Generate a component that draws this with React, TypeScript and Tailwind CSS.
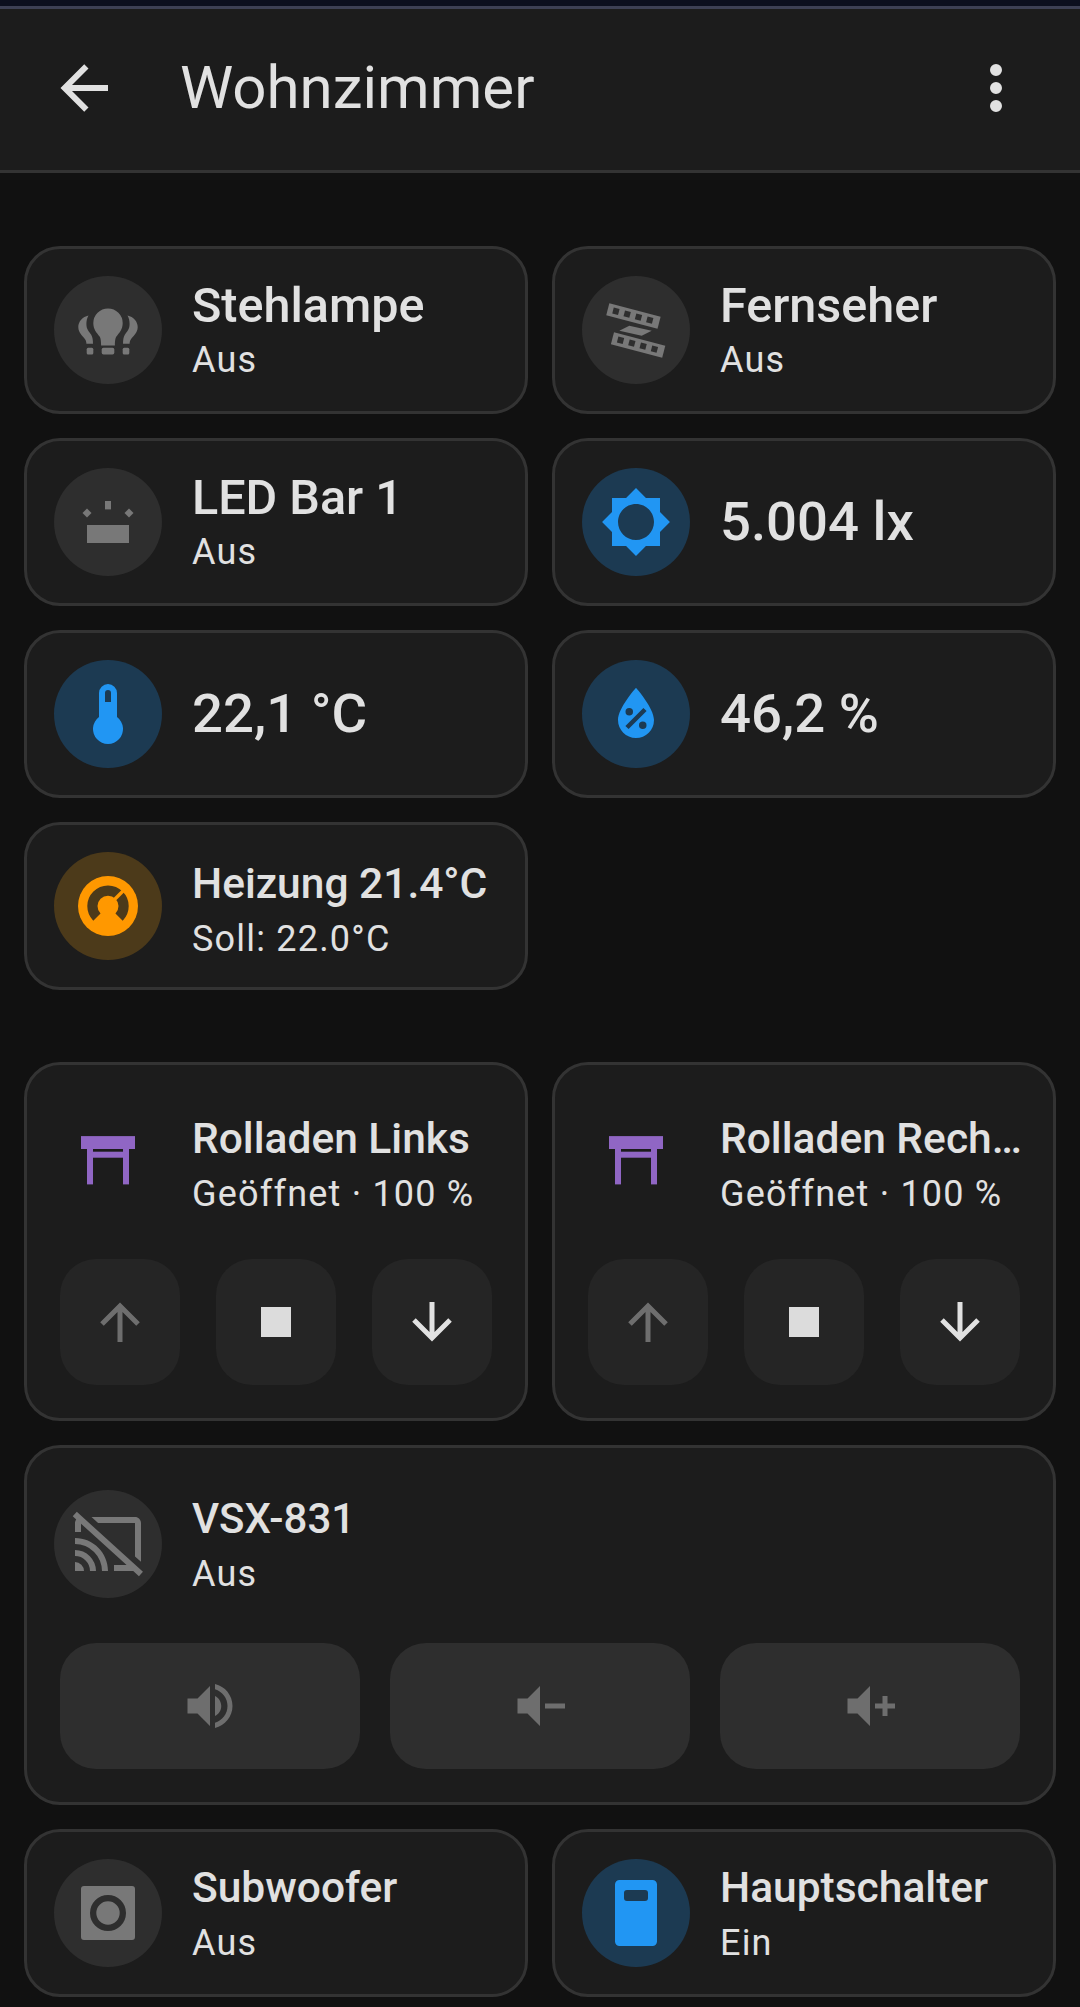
import React from "react";

const BLUE = "#2196f3";
const GRAY = "#787878";

function Ico({ children, cls = "w-[72px] h-[72px]", vb = "0 0 24 24" }: { children: React.ReactNode; cls?: string; vb?: string }) {
  return (
    <svg viewBox={vb} className={cls + " shrink-0"}>
      {children}
    </svg>
  );
}

const P = ({ d, c }: { d: string; c: string }) => <path d={d} fill={c} fillRule="evenodd" />;

const Lamp = () => (
  <Ico>
    <g fill={GRAY}>
      <path d="M12 4.8a4.9 4.9 0 0 1 4.9 4.9c0 2.2-1.2 3.3-2.1 4.5-.3.5-.5 1.2-.5 3H9.7c0-1.8-.2-2.5-.5-3-.9-1.2-2.1-2.3-2.1-4.5A4.9 4.9 0 0 1 12 4.8z" />
      <rect x="9.9" y="17.9" width="4.2" height="2.3" rx="0.6" />
      <path d="M5.5 7.2C3.5 7.6 2.1 9.3 2.1 11c0 2.1 1.6 3 2.3 4.2.3.5.4 1 .4 1.4H7c0-1.4-.2-2.2-.6-3C5.6 12.400 4.800 11.800 4.800 10c0-1 .2-2 .7-2.800z" />
      <path d="M18.500 7.200C20.500 7.600 21.900 9.300 21.900 11c0 2.100-1.600 3-2.300 4.200-.3.500-.4 1-.4 1.400H17c0-1.400.2-2.200.6-3 .8-1.200 1.600-1.800 1.600-3.600 0-1-.2-2-.7-2.800z" />
      <rect x="4.900" y="17.900" width="2.200" height="2.300" rx="0.5" />
      <rect x="16.900" y="17.900" width="2.200" height="2.300" rx="0.5" />
    </g>
  </Ico>
);

const Strip = ({ x, y }: { x: number; y: number }) => (
  <g transform={`translate(${x} ${y}) rotate(14.6)`}>
    <rect width="159" height="37" fill={GRAY} />
    {[16, 51, 86, 121].map((h) => (
      <rect key={h} x={h} y="9" width="18" height="18" fill="#2e2e2e" />
    ))}
  </g>
);

const Film = () => (
  <Ico vb="90 100 216 216">
    <Strip x={118} y={128} />
    <Strip x={132} y={215} />
    <polygon points="178,195 245,210 215,225 148,210" fill={GRAY} />
  </Ico>
);

const Led = () => (
  <Ico>
    <g fill={GRAY}>
      <rect x="5" y="13" width="14" height="6" />
      <rect x="11" y="5" width="2" height="2.800" />
      <polygon points="5,7.500 6.500,9 5,10.500 3.500,9" />
      <polygon points="19,7.500 20.500,9 19,10.500 17.500,9" />
    </g>
  </Ico>
);

const Sun = () => (
  <Ico>
    <P c={BLUE} d="M20 8.690V4h-4.690L12 .690 8.690 4H4v4.690L.690 12 4 15.310V20h4.690L12 23.310 15.310 20H20v-4.690L23.310 12 20 8.690zM12 18c-3.310 0-6-2.690-6-6s2.690-6 6-6 6 2.690 6 6-2.690 6-6 6z" />
  </Ico>
);

const Thermo = () => (
  <Ico>
    <P c={BLUE} d="M15 13V5A3 3 0 0 0 9 5V13A5 5 0 1 0 15 13M12 4A1 1 0 0 1 13 5V8H11V5A1 1 0 0 1 12 4Z" />
  </Ico>
);

const Drop = () => (
  <Ico>
    <P c={BLUE} d="M12,3.25C12,3.25 6,10 6,14C6,17.32 8.69,20 12,20A6,6 0 0,0 18,14C18,10 12,3.25 12,3.25M14.47,9.97L15.53,11.03L9.53,17.03L8.47,15.97M9.75,10A1.25,1.25 0 0,1 11,11.25A1.25,1.25 0 0,1 9.75,12.5A1.25,1.25 0 0,1 8.5,11.25A1.25,1.25 0 0,1 9.75,10M14.25,14.5A1.25,1.25 0 0,1 15.5,15.75A1.25,1.25 0 0,1 14.25,17A1.25,1.25 0 0,1 13,15.75A1.25,1.25 0 0,1 14.25,14.5Z" />
  </Ico>
);

const Gauge = () => (
  <Ico>
    <circle cx="12" cy="12" r="10" fill="#ff9800" />
    <path d="M8.300 15.700A5.200 5.200 0 1 1 15.700 15.700" fill="none" stroke="#4c3a1a" strokeWidth="3.400" />
    <path d="M12 12L18.500 5.500" fill="none" stroke="#ff9800" strokeWidth="1.100" />
  </Ico>
);

const Gate = () => (
  <Ico>
    <g fill="#9066c4">
      <rect x="3" y="3.700" width="18" height="4.300" />
      <rect x="5" y="8" width="2" height="11.800" />
      <rect x="17" y="8" width="2" height="11.800" />
      <rect x="7" y="8.900" width="10" height="2" />
    </g>
  </Ico>
);

const CastOff = () => (
  <Ico>
    <P c={GRAY} d="M1.6,1.27L0.25,2.75L1.41,3.8C1.16,4.13 1,4.55 1,5V8H3V5.23L18.2,19H14V21H20.41L22.31,22.72L23.65,21.24M6.5,3L8.7,5H21V16.14L23,17.95V5C23,3.89 22.1,3 21,3M1,10V12A9,9 0 0,1 10,21H12C12,14.92 7.08,10 1,10M1,14V16A5,5 0 0,1 6,21H8A7,7 0 0,0 1,14M1,18V21H4A3,3 0 0,0 1,18Z" />
  </Ico>
);

const Woofer = () => (
  <Ico>
    <P c={GRAY} d="M4 3H20A1 1 0 0 1 21 4V20A1 1 0 0 1 20 21H4A1 1 0 0 1 3 20V4A1 1 0 0 1 4 3ZM12 6A6 6 0 1 0 12 18A6 6 0 1 0 12 6ZM12 8.100A3.900 3.900 0 1 1 12 15.900A3.900 3.900 0 1 1 12 8.100Z" />
  </Ico>
);

const Switch = () => (
  <Ico>
    <P c={BLUE} d="M6.500 1H17.500A1.500 1.500 0 0 1 19 2.500V21.500A1.500 1.500 0 0 1 17.500 23H6.500A1.500 1.500 0 0 1 5 21.500V2.500A1.500 1.500 0 0 1 6.500 1ZM9 4.300A1 1 0 0 0 8 5.300V7A1 1 0 0 0 9 8H15A1 1 0 0 0 16 7V5.300A1 1 0 0 0 15 4.300Z" />
  </Ico>
);

type Tone = "gray" | "blue" | "orange" | "none";
type Size = "lg" | "md" | "sm" | "xl";

const toneCls: Record<Tone, string> = {
  gray: "bg-[#2e2e2e]",
  blue: "bg-[#1c3a52]",
  orange: "bg-[#4c3a1a]",
  none: "",
};

const sizeCls: Record<Size, string> = {
  xl: "text-[54.5px] leading-[66px] -translate-y-px",
  lg: "text-[48.5px] leading-[60px]",
  md: "text-[42.5px] leading-[60px] -translate-y-px",
  sm: "text-[42px] leading-[60px] -translate-y-px",
};

type RowProps = { icon: React.ReactNode; tone: Tone; title: string; sub?: string; size?: Size; low?: boolean };

function Row({ icon, tone, title, sub, size = "md", low }: RowProps) {
  return (
    <div className="flex items-center gap-[30px] min-w-0">
      <div className={"w-[108px] h-[108px] rounded-full flex items-center justify-center shrink-0 " + toneCls[tone]}>{icon}</div>
      <div className={"flex flex-col min-w-0 flex-1 " + (low ? "pt-[6px]" : "")}>
        <div className={sizeCls[size] + " font-medium text-[#e1e1e1] truncate"}>{title}</div>
        {sub ? <div className="text-[36px] leading-[48px] tracking-[1.2px] text-[#e1e1e1] truncate">{sub}</div> : null}
      </div>
    </div>
  );
}

function Tile(props: RowProps) {
  return (
    <div className="h-[168px] rounded-[36px] border-[3px] border-[#333333] bg-[#1c1c1c] px-[27px] flex items-center">
      <div className="w-full">
        <Row {...props} />
      </div>
    </div>
  );
}

function Btn({ d, c, wide }: { d: string; c: string; wide?: boolean }) {
  return (
    <div className={(wide ? "bg-[#2e2e2e] w-[300px] " : "bg-[#252525] w-[120px] ") + "h-[126px] rounded-[36px] flex items-center justify-center"}>
      <svg viewBox="0 0 24 24" className="w-[60px] h-[60px]">
        <path d={d} fill={c} />
      </svg>
    </div>
  );
}

const UP = "M13,20H11V8L5.5,13.5L4.08,12.08L12,4.16L19.92,12.08L18.5,13.5L13,8V20Z";
const STOP = "M18,18H6V6H18V18Z";
const DOWN = "M11,4H13V16L18.5,10.5L19.92,11.92L12,19.84L4.08,11.92L5.5,10.5L11,16V4Z";

function Cover({ title }: { title: string }) {
  return (
    <div className="h-[359px] rounded-[36px] border-[3px] border-[#333333] bg-[#1c1c1c] px-[27px] pt-[39px] flex flex-col">
      <Row icon={<Gate />} tone="none" title={title} sub="Geöffnet · 100 %" low />
      <div className="flex justify-between mt-[41px] px-[6px]">
        <Btn d={UP} c="#6e6e6e" />
        <Btn d={STOP} c="#dcdcdc" />
        <Btn d={DOWN} c="#e1e1e1" />
      </div>
    </div>
  );
}

export default function App() {
  return (
    <div className="w-[1080px] h-[2007px] overflow-hidden bg-[#111111] font-['Roboto',sans-serif]">
      <div className="h-[6px] bg-[#0c0f1e]" />
      <div className="h-[3px] bg-[#3d4054]" />
      <header className="h-[164px] bg-[#1c1c1c] border-b-[3px] border-[#333333] flex items-center pl-[48px] pr-[48px] pb-[3px]">
        <svg viewBox="0 0 24 24" className="w-[72px] h-[72px] shrink-0">
          <path d="M20,11V13H8L13.5,18.5L12.08,19.92L4.16,12L12.08,4.08L13.5,5.5L8,11H20Z" fill="#e1e1e1" />
        </svg>
        <div className="ml-[60px] flex-1 text-[60px] leading-[72px] text-[#e1e1e1]">Wohnzimmer</div>
        <svg viewBox="0 0 24 24" className="w-[72px] h-[72px] shrink-0">
          <path d="M12,16A2,2 0 0,1 14,18A2,2 0 0,1 12,20A2,2 0 0,1 10,18A2,2 0 0,1 12,16M12,10A2,2 0 0,1 14,12A2,2 0 0,1 12,14A2,2 0 0,1 10,12A2,2 0 0,1 12,10M12,4A2,2 0 0,1 14,6A2,2 0 0,1 12,8A2,2 0 0,1 10,6A2,2 0 0,1 12,4Z" fill="#e1e1e1" />
        </svg>
      </header>
      <main className="px-[24px] pt-[73px]">
        <div className="grid grid-cols-2 gap-[24px]">
          <Tile icon={<Lamp />} tone="gray" title="Stehlampe" sub="Aus" size="lg" />
          <Tile icon={<Film />} tone="gray" title="Fernseher" sub="Aus" size="lg" />
          <Tile icon={<Led />} tone="gray" title="LED Bar 1" sub="Aus" size="lg" />
          <Tile icon={<Sun />} tone="blue" title="5.004 lx" size="xl" />
          <Tile icon={<Thermo />} tone="blue" title="22,1 °C" size="xl" />
          <Tile icon={<Drop />} tone="blue" title="46,2 %" size="xl" />
          <Tile icon={<Gauge />} tone="orange" title="Heizung 21.4°C" sub="Soll: 22.0°C" low />
        </div>
        <div className="grid grid-cols-2 gap-[24px] mt-[72px]">
          <Cover title="Rolladen Links" />
          <Cover title="Rolladen Rechts" />
          <div className="col-span-2 h-[360px] rounded-[36px] border-[3px] border-[#333333] bg-[#1c1c1c] pl-[27px] pr-[33px] pt-[42px] flex flex-col">
            <Row icon={<CastOff />} tone="gray" title="VSX-831" sub="Aus" size="sm" />
            <div className="flex justify-between mt-[45px] pl-[6px]">
              <Btn wide c="#6e6e6e" d="M14,3.23V5.29C16.89,6.15 19,8.83 19,12C19,15.17 16.89,17.84 14,18.7V20.77C18,19.86 21,16.28 21,12C21,7.72 18,4.14 14,3.23M16.5,12C16.5,10.23 15.5,8.71 14,7.97V16.03C15.5,15.29 16.5,13.77 16.5,12M3,9V15H7L12,20V4L7,9H3Z" />
              <Btn wide c="#6e6e6e" d="M3,9H7L12,4V20L7,15H3V9M14,11H22V13H14V11Z" />
              <Btn wide c="#6e6e6e" d="M3,9H7L12,4V20L7,15H3V9M14,11H17V8H19V11H22V13H19V16H17V13H14V11Z" />
            </div>
          </div>
          <Tile icon={<Woofer />} tone="gray" title="Subwoofer" sub="Aus" />
          <Tile icon={<Switch />} tone="blue" title="Hauptschalter" sub="Ein" />
        </div>
      </main>
    </div>
  );
}
